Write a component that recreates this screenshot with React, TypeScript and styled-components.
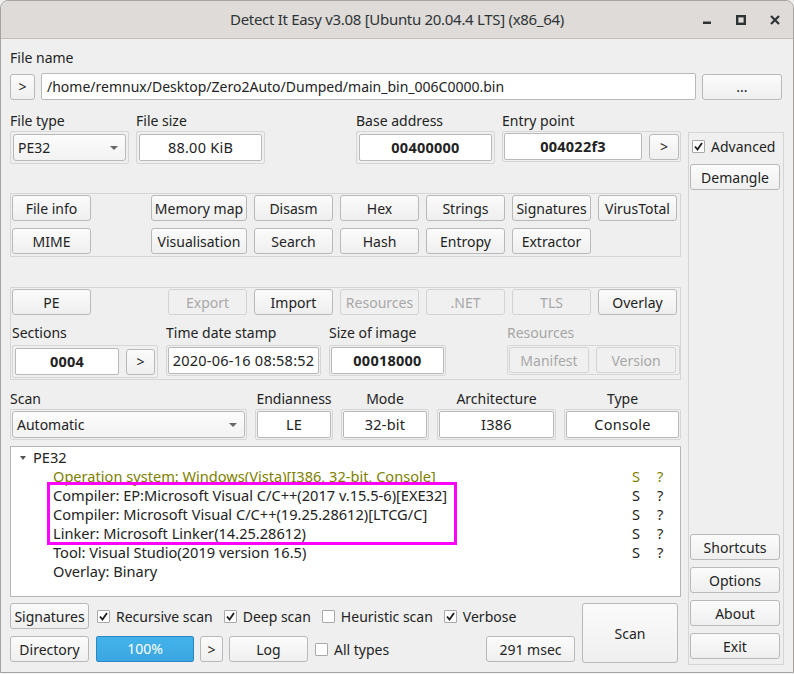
import React from 'react';
import styled, { createGlobalStyle, css } from 'styled-components';

const GlobalStyle = createGlobalStyle`
  html, body { margin: 0; padding: 0; background: #efefef; }
  body { font-family: "Noto Sans", "DejaVu Sans", sans-serif; font-size: 14px; color: #232323; }
  * { box-sizing: border-box; }
`;

const Window = styled.div`
  width: 794px;
  height: 673px;
  border: 1px solid #a6a3a0;
  border-radius: 8px 8px 0 0;
  background: #efefef;
  overflow: hidden;
  display: flex;
  flex-direction: column;
`;

const TitleBar = styled.div`
  height: 38px;
  flex: none;
  background: #dedbd8;
  border-bottom: 1px solid #c2beba;
  display: grid;
  grid-template-columns: 1fr auto 1fr;
  align-items: center;
`;

const Title = styled.div`
  grid-column: 2;
  font-size: 15px;
  letter-spacing: -0.3px;
  color: #2e3436;
  padding-bottom: 1px;
`;

const Controls = styled.div`
  grid-column: 3;
  justify-self: end;
  display: flex;
  margin-right: 1px;
`;

const Ctrl = styled.div`
  width: 34px;
  height: 24px;
  display: flex;
  align-items: center;
  justify-content: center;
  color: #2e3436;
`;

const Content = styled.div`
  padding: 10px 9px 0 9px;
  display: flex;
  flex-direction: column;
`;

const Label = styled.div<{ $center?: boolean; $disabled?: boolean }>`
  height: 18px;
  line-height: 18px;
  white-space: nowrap;
  color: ${(p) => (p.$disabled ? '#a6a6a6' : '#232323')};
  text-align: ${(p) => (p.$center ? 'center' : 'left')};
`;

const FileRow = styled.div`
  margin-top: 6px;
  display: flex;
  align-items: center;
  gap: 6px;
  padding-right: 2px;
`;

const Button = styled.button<{ $w?: number; $h?: number; $end?: boolean }>`
  font: inherit;
  font-size: 14px;
  height: ${(p) => p.$h ?? 26}px;
  width: ${(p) => (p.$w ? `${p.$w}px` : '100%')};
  flex: none;
  padding: 0;
  border: 1px solid #b9b9b9;
  border-radius: 3px;
  background: linear-gradient(#fbfbfb, #efefef);
  color: #232323;
  white-space: nowrap;
  overflow: hidden;
  ${(p) => p.$end && css`justify-self: end;`}
  &:disabled {
    color: #a8a8a8;
    border-color: #d3d3d3;
    background: #f0f0f0;
  }
`;

const PathInput = styled.div`
  flex: 1;
  height: 27px;
  line-height: 25px;
  background: #fff;
  border: 1px solid #b9b9b9;
  border-radius: 2px;
  padding: 0 5px;
  white-space: nowrap;
`;

const Main = styled.div`
  margin-top: 12px;
  display: flex;
  gap: 7px;
`;

const LeftCol = styled.div`
  width: 671px;
  flex: none;
  display: flex;
  flex-direction: column;
`;

const RightCol = styled.div`
  width: 96px;
  height: 533px;
  margin-top: 20px;
  border: 1px solid #d5d5d5;
  padding: 3px 2px 5px 1px;
  display: flex;
  flex-direction: column;
`;

const InfoRow = styled.div`
  display: flex;
  gap: 7px;
`;

const FieldCol = styled.div<{ $w?: number; $auto?: boolean }>`
  display: flex;
  flex-direction: column;
  gap: 1px;
  ${(p) => p.$w && css`width: ${p.$w}px; flex: none;`}
  ${(p) => p.$auto && css`margin-left: auto;`}
`;

const Frame = styled.div<{ $pad?: number }>`
  border: 1px solid #d6d6d6;
  border-radius: 2px;
  padding: ${(p) => p.$pad ?? 2}px;
  display: flex;
  align-items: center;
  gap: 7px;
`;

const TextField = styled.div<{ $bold?: boolean; $w?: number }>`
  height: 27px;
  line-height: 25px;
  ${(p) => (p.$w ? css`width: ${p.$w}px; flex: none;` : css`flex: 1;`)}
  background: #fff;
  border: 1px solid #b9b9b9;
  border-radius: 2px;
  text-align: center;
  white-space: nowrap;
  overflow: hidden;
  font-size: 14.5px;
  letter-spacing: 0.25px;
  font-weight: ${(p) => (p.$bold ? 700 : 400)};
`;

const Combo = styled.div`
  flex: 1;
  height: 27px;
  border: 1px solid #b9b9b9;
  border-radius: 3px;
  background: linear-gradient(#fcfcfc, #f2f2f2);
  padding: 0 7px 0 4px;
  display: flex;
  align-items: center;
  justify-content: space-between;
`;

const Arrow = styled.span`
  width: 0;
  height: 0;
  border-left: 4px solid transparent;
  border-right: 4px solid transparent;
  border-top: 4px solid #666;
`;

const Group = styled.div<{ $mt: number }>`
  margin-top: ${(p) => p.$mt}px;
  border: 1px solid #d6d6d6;
  padding: 1px 3px 1px 1px;
  display: flex;
  flex-direction: column;
`;

const ButtonGrid = styled.div`
  display: grid;
  grid-template-columns: 79px 1fr repeat(5, 79px);
  gap: 7px;
  padding-bottom: 1px;
`;

const SubRow = styled.div`
  display: flex;
  margin-top: 8px;
  gap: 8px;
  align-items: flex-start;
`;

const SubCol = styled.div<{ $w: number; $auto?: boolean }>`
  width: ${(p) => p.$w}px;
  flex: none;
  display: flex;
  flex-direction: column;
  gap: 3px;
  ${(p) => p.$auto && css`margin-left: auto; margin-right: -3px;`}
`;

const ScanGrid = styled.div`
  margin-top: 10px;
  display: grid;
  grid-template-columns: 237px 78px 88px 119px 1fr;
  column-gap: 8px;
`;

const Tree = styled.div`
  position: relative;
  margin-top: 6px;
  height: 151px;
  background: #fff;
  border: 1px solid #b5b5b5;
  padding-top: 1px;
  font-size: 14.6px;
`;

const TreeHead = styled.div`
  height: 19px;
  line-height: 19px;
  padding-left: 9px;
  display: flex;
  align-items: center;
  gap: 7px;
`;

const TreeArrow = styled.span`
  width: 0;
  height: 0;
  border-left: 3px solid transparent;
  border-right: 3px solid transparent;
  border-top: 4px solid #555;
`;

const TreeRow = styled.div<{ $olive?: boolean }>`
  height: 19px;
  line-height: 19px;
  display: grid;
  grid-template-columns: 1fr 25px 16px;
  padding-left: 42px;
  padding-right: 7px;
  white-space: nowrap;
  color: ${(p) => (p.$olive ? '#808000' : '#232323')};
`;

const Highlight = styled.div`
  position: absolute;
  left: 36px;
  top: 35px;
  width: 410px;
  height: 63px;
  border: 3px solid #ff00ff;
  pointer-events: none;
`;

const Bottom = styled.div`
  margin-top: 6px;
  display: flex;
  gap: 7px;
`;

const BottomLeft = styled.div`
  flex: 1;
  display: flex;
  flex-direction: column;
  gap: 7px;
`;

const BRow = styled.div<{ $gap: number }>`
  display: flex;
  align-items: center;
  gap: ${(p) => p.$gap}px;
`;

const Check = styled.label<{ $mr?: number; $ml?: number }>`
  display: flex;
  align-items: center;
  gap: 6px;
  white-space: nowrap;
  margin-right: ${(p) => p.$mr ?? 0}px;
  margin-left: ${(p) => p.$ml ?? 0}px;
`;

const Box = styled.span`
  width: 13px;
  height: 13px;
  flex: none;
  background: #fff;
  border: 1px solid #a9a9a9;
  border-radius: 1px;
  display: flex;
  align-items: center;
  justify-content: center;
`;

const Progress = styled.div`
  width: 98px;
  height: 26px;
  flex: none;
  margin-left: 1px;
  border: 1px solid #2b86c4;
  border-radius: 2px;
  background: linear-gradient(#44b2ea, #3aa6e2);
  color: #fff;
  text-align: center;
  line-height: 24px;
`;

const Spacer = styled.div`
  flex: 1;
`;

const RightButtons = styled.div`
  margin-top: auto;
  display: flex;
  flex-direction: column;
  gap: 7px;
`;

const CheckBox = ({ on }: { on: boolean }) => (
  <Box>
    {on && (
      <svg width="11" height="11" viewBox="0 0 11 11">
        <path d="M2 5.5 L4.5 8.5 L9 2" fill="none" stroke="#1d1d1d" strokeWidth="1.8" />
      </svg>
    )}
  </Box>
);

const results: { t: string; olive?: boolean }[] = [
  { t: 'Operation system: Windows(Vista)[I386, 32-bit, Console]', olive: true },
  { t: 'Compiler: EP:Microsoft Visual C/C++(2017 v.15.5-6)[EXE32]' },
  { t: 'Compiler: Microsoft Visual C/C++(19.25.28612)[LTCG/C]' },
  { t: 'Linker: Microsoft Linker(14.25.28612)' },
  { t: 'Tool: Visual Studio(2019 version 16.5)' },
];

export default function App() {
  return (
    <>
      <GlobalStyle />
      <Window>
        <TitleBar>
          <Title>Detect It Easy v3.08 [Ubuntu 20.04.4 LTS] (x86_64)</Title>
          <Controls>
            <Ctrl>
              <svg width="10" height="10" viewBox="0 0 10 10">
                <rect x="1" y="6.5" width="8" height="2.5" fill="currentColor" />
              </svg>
            </Ctrl>
            <Ctrl>
              <svg width="10" height="10" viewBox="0 0 10 10">
                <rect x="1.2" y="1.2" width="7.6" height="7.6" fill="none" stroke="currentColor" strokeWidth="2.4" />
              </svg>
            </Ctrl>
            <Ctrl>
              <svg width="10" height="10" viewBox="0 0 10 10">
                <path d="M1 1 L9 9 M9 1 L1 9" stroke="currentColor" strokeWidth="2.2" />
              </svg>
            </Ctrl>
          </Controls>
        </TitleBar>
        <Content>
          <Label>File name</Label>
          <FileRow>
            <Button $w={25}>&gt;</Button>
            <PathInput>/home/remnux/Desktop/Zero2Auto/Dumped/main_bin_006C0000.bin</PathInput>
            <Button $w={80}>...</Button>
          </FileRow>
          <Main>
            <LeftCol>
              <InfoRow>
                <FieldCol $w={119}>
                  <Label>File type</Label>
                  <Frame>
                    <Combo>
                      <span>PE32</span>
                      <Arrow />
                    </Combo>
                  </Frame>
                </FieldCol>
                <FieldCol $w={129}>
                  <Label>File size</Label>
                  <Frame>
                    <TextField>88.00 KiB</TextField>
                  </Frame>
                </FieldCol>
                <FieldCol $w={139} $auto>
                  <Label>Base address</Label>
                  <Frame>
                    <TextField $bold>00400000</TextField>
                  </Frame>
                </FieldCol>
                <FieldCol $w={179}>
                  <Label>Entry point</Label>
                  <Frame $pad={1}>
                    <TextField $bold>004022f3</TextField>
                    <Button $w={30}>&gt;</Button>
                  </Frame>
                </FieldCol>
              </InfoRow>

              <Group $mt={29}>
                <ButtonGrid>
                  <Button>File info</Button>
                  <Button $w={96} $end>Memory map</Button>
                  <Button>Disasm</Button>
                  <Button>Hex</Button>
                  <Button>Strings</Button>
                  <Button>Signatures</Button>
                  <Button>VirusTotal</Button>
                  <Button>MIME</Button>
                  <Button $w={96} $end>Visualisation</Button>
                  <Button>Search</Button>
                  <Button>Hash</Button>
                  <Button>Entropy</Button>
                  <Button>Extractor</Button>
                </ButtonGrid>
              </Group>

              <Group $mt={30}>
                <ButtonGrid>
                  <Button>PE</Button>
                  <Button $w={79} $end disabled>Export</Button>
                  <Button>Import</Button>
                  <Button disabled>Resources</Button>
                  <Button disabled>.NET</Button>
                  <Button disabled>TLS</Button>
                  <Button>Overlay</Button>
                </ButtonGrid>
                <SubRow>
                  <SubCol $w={146}>
                    <Label>Sections</Label>
                    <Frame>
                      <TextField $bold>0004</TextField>
                      <Button $w={29}>&gt;</Button>
                    </Frame>
                  </SubCol>
                  <SubCol $w={155}>
                    <Label>Time date stamp</Label>
                    <Frame $pad={1}>
                      <TextField>2020-06-16 08:58:52</TextField>
                    </Frame>
                  </SubCol>
                  <SubCol $w={117}>
                    <Label>Size of image</Label>
                    <Frame $pad={1}>
                      <TextField $bold>00018000</TextField>
                    </Frame>
                  </SubCol>
                  <SubCol $w={173} $auto>
                    <Label $disabled>Resources</Label>
                    <Frame $pad={1}>
                      <Button $w={80} disabled>Manifest</Button>
                      <Button $w={80} disabled>Version</Button>
                    </Frame>
                  </SubCol>
                </SubRow>
              </Group>

              <ScanGrid>
                <FieldCol>
                  <Label>Scan</Label>
                  <Frame $pad={1}>
                    <Combo>
                      <span>Automatic</span>
                      <Arrow />
                    </Combo>
                  </Frame>
                </FieldCol>
                <FieldCol>
                  <Label $center>Endianness</Label>
                  <Frame $pad={1}>
                    <TextField>LE</TextField>
                  </Frame>
                </FieldCol>
                <FieldCol>
                  <Label $center>Mode</Label>
                  <Frame $pad={1}>
                    <TextField>32-bit</TextField>
                  </Frame>
                </FieldCol>
                <FieldCol>
                  <Label $center>Architecture</Label>
                  <Frame $pad={1}>
                    <TextField>I386</TextField>
                  </Frame>
                </FieldCol>
                <FieldCol>
                  <Label $center>Type</Label>
                  <Frame $pad={1}>
                    <TextField>Console</TextField>
                  </Frame>
                </FieldCol>
              </ScanGrid>

              <Tree>
                <TreeHead>
                  <TreeArrow />
                  <span>PE32</span>
                </TreeHead>
                {results.map((r) => (
                  <TreeRow key={r.t} $olive={r.olive}>
                    <span>{r.t}</span>
                    <span>S</span>
                    <span>?</span>
                  </TreeRow>
                ))}
                <TreeRow>
                  <span>Overlay: Binary</span>
                </TreeRow>
                <Highlight />
              </Tree>

              <Bottom>
                <BottomLeft>
                  <BRow $gap={8}>
                    <Button $w={79}>Signatures</Button>
                    <Check $mr={3}><CheckBox on />Recursive scan</Check>
                    <Check $mr={3}><CheckBox on />Deep scan</Check>
                    <Check $mr={3}><CheckBox on={false} />Heuristic scan</Check>
                    <Check><CheckBox on />Verbose</Check>
                  </BRow>
                  <BRow $gap={6}>
                    <Button $w={79}>Directory</Button>
                    <Progress>100%</Progress>
                    <Button $w={23}>&gt;</Button>
                    <Button $w={79}>Log</Button>
                    <Check $ml={1}><CheckBox on={false} />All types</Check>
                    <Spacer />
                    <Button $w={89}>291 msec</Button>
                  </BRow>
                </BottomLeft>
                <Button $w={96} $h={60} style={{ marginRight: 3 }}>Scan</Button>
              </Bottom>
            </LeftCol>

            <RightCol>
              <Check $ml={2} style={{ height: 20 }}>
                <CheckBox on />
                Advanced
              </Check>
              <Button $w={90} style={{ marginTop: 8 }}>Demangle</Button>
              <RightButtons>
                <Button $w={90}>Shortcuts</Button>
                <Button $w={90}>Options</Button>
                <Button $w={90}>About</Button>
                <Button $w={90}>Exit</Button>
              </RightButtons>
            </RightCol>
          </Main>
        </Content>
      </Window>
    </>
  );
}
